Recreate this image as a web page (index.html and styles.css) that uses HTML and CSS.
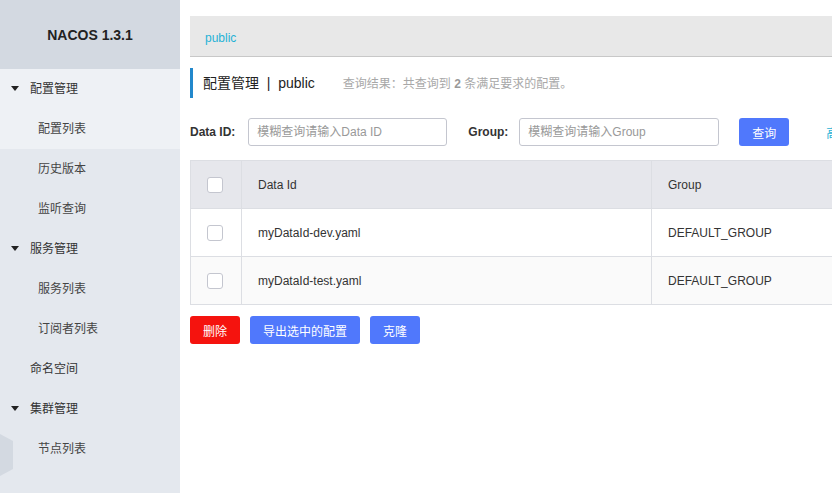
FILE: index.html
```html
<!DOCTYPE html>
<html lang="zh-CN">
<head>
<meta charset="utf-8">
<title>Nacos</title>
<link rel="stylesheet" href="styles.css">
</head>
<body>
<div class="app">
  <aside class="sidebar">
    <div class="brand">NACOS 1.3.1</div>
    <div class="menu-active">
      <div class="menu-group"><span class="tri"></span>配置管理</div>
      <div class="menu-item">配置列表</div>
    </div>
    <div class="menu-item">历史版本</div>
    <div class="menu-item">监听查询</div>
    <div class="menu-group"><span class="tri"></span>服务管理</div>
    <div class="menu-item">服务列表</div>
    <div class="menu-item">订阅者列表</div>
    <div class="menu-group">命名空间</div>
    <div class="menu-group"><span class="tri"></span>集群管理</div>
    <div class="menu-item">节点列表</div>
    <div class="hex"></div>
  </aside>
  <main class="main">
    <div class="crumb">public</div>
    <div class="title">
      <span class="title-main">配置管理&nbsp;&nbsp;|&nbsp;&nbsp;public</span>
      <span class="title-sub">查询结果：共查询到 <b>2</b> 条满足要求的配置。</span>
    </div>
    <div class="search">
      <label class="lbl">Data ID:</label>
      <div class="input input-id">模糊查询请输入Data ID</div>
      <label class="lbl lbl-group">Group:</label>
      <div class="input input-group">模糊查询请输入Group</div>
      <button class="btn btn-primary btn-query">查询</button>
      <span class="adv">高级查询</span>
    </div>
    <table class="grid">
      <colgroup><col class="c1"><col class="c2"><col class="c3"></colgroup>
      <thead>
        <tr><th><span class="cb"></span></th><th>Data Id</th><th>Group</th></tr>
      </thead>
      <tbody>
        <tr><td><span class="cb"></span></td><td>myDataId-dev.yaml</td><td>DEFAULT_GROUP</td></tr>
        <tr class="alt"><td><span class="cb"></span></td><td>myDataId-test.yaml</td><td>DEFAULT_GROUP</td></tr>
      </tbody>
    </table>
    <div class="actions">
      <button class="btn btn-danger">删除</button>
      <button class="btn btn-primary btn-export">导出选中的配置</button>
      <button class="btn btn-primary">克隆</button>
    </div>
  </main>
</div>
</body>
</html>
```
FILE: styles.css
```css
* { box-sizing: border-box; }
html, body { margin: 0; padding: 0; }
body {
  font-family: "Liberation Sans", "Noto Sans CJK SC", sans-serif;
  font-size: 12px;
  color: #333;
  background: #fff;
  overflow: hidden;
}
.app { display: flex; width: 832px; height: 493px; }

.sidebar {
  position: relative;
  width: 180px;
  flex: 0 0 180px;
  background: #e4e8ee;
  height: 493px;
  overflow: hidden;
}
.brand {
  height: 69px;
  background: #d3d9e1;
  display: flex;
  align-items: center;
  justify-content: center;
  font-weight: bold;
  font-size: 14px;
  color: #222;
}
.menu-active { background: #eef1f5; }
.menu-group, .menu-item {
  height: 40px;
  display: flex;
  align-items: center;
  padding-bottom: 4px;
  font-size: 12px;
  color: #333;
}
.menu-group { padding-left: 30px; position: relative; }
.menu-item { padding-left: 38px; color: #444; }
.tri {
  position: absolute;
  left: 11px;
  top: 17px;
  width: 0; height: 0;
  border-left: 4px solid transparent;
  border-right: 4px solid transparent;
  border-top: 5px solid #222;
}
.hex {
  position: absolute;
  left: -14px;
  top: 430px;
  width: 27px;
  height: 50px;
  background: #d3d9e1;
  clip-path: polygon(25% 0, 100% 22%, 100% 78%, 25% 100%, 0 50%);
}

.main {
  flex: 1;
  padding: 16px 0 0 10px;
  overflow: hidden;
  min-width: 0;
}
.crumb {
  height: 41px;
  background: #e8e8e8;
  border-bottom: 1px solid #c8c8c8;
  padding: 3px 0 0 15px;
  line-height: 38px;
  color: #26b2d6;
  font-size: 12px;
}
.title {
  margin-top: 11px;
  height: 30px;
  border-left: 3px solid #2288cc;
  padding-left: 10px;
  padding-bottom: 2px;
  display: flex;
  align-items: center;
  white-space: nowrap;
}
.title-main { font-size: 14px; color: #222; }
.title-sub { margin-left: 28px; color: #a8a8a8; font-size: 12px; }
.title-sub b { color: #999; }

.search {
  margin-top: 20px;
  height: 28px;
  display: flex;
  align-items: center;
  white-space: nowrap;
}
.search > * { flex: 0 0 auto; }
.lbl { font-weight: bold; color: #333; font-size: 12px; }
.input {
  height: 28px;
  border: 1px solid #c4c6cf;
  border-radius: 3px;
  padding-left: 8px;
  line-height: 26px;
  color: #999;
  font-size: 12px;
}
.input-id { width: 199px; margin-left: 13px; }
.lbl-group { margin-left: 21px; }
.input-group { width: 200px; margin-left: 11px; }
.btn {
  height: 28px;
  border: none;
  border-radius: 3px;
  color: #fff;
  font-family: inherit;
  font-size: 12px;
  padding: 0;
  cursor: pointer;
}
.btn-primary { background: #5078fc; }
.btn-danger { background: #f5130e; }
.btn-query { width: 50px; margin-left: 20px; }
.adv { margin-left: 37px; color: #26b2d6; }

.grid {
  margin-top: 14px;
  border-collapse: collapse;
  width: 660px;
  table-layout: fixed;
}
.c1 { width: 51px; }
.c2 { width: 410px; }
.c3 { width: 200px; }
.grid th, .grid td {
  height: 48px;
  border: 1px solid #dcdee3;
  text-align: left;
  font-weight: normal;
  padding: 0 0 0 16px;
  font-size: 12px;
  color: #333;
}
.grid thead tr { background: #e6e7ec; }
.grid tr.alt { background: #fafafa; }
.cb {
  display: block;
  width: 16px;
  height: 16px;
  border: 1px solid #c4c6cf;
  border-radius: 3px;
  background: #fff;
}

.actions {
  margin-top: 11px;
  display: flex;
  gap: 10px;
}
.actions .btn { width: 50px; }
.actions .btn-export { width: 110px; }
```
